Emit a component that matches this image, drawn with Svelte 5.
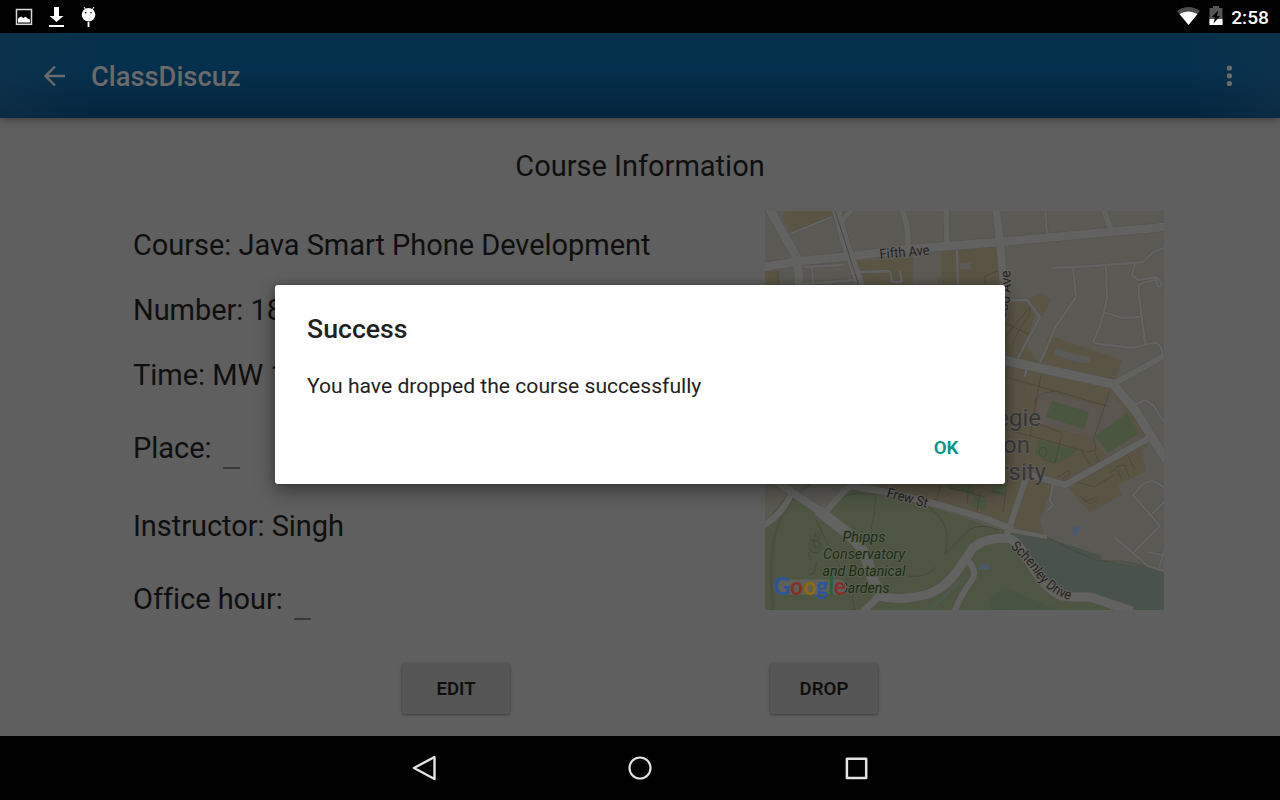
<script>
  const details = [
    { label: 'Course:', value: 'Java Smart Phone Development', height: 65 },
    { label: 'Number:', value: '18', height: 65 },
    { label: 'Time:', value: 'MW 1', height: 65 },
    { label: 'Place:', value: '', height: 81 },
    { label: 'Instructor:', value: 'Singh', height: 75 },
    { label: 'Office hour:', value: '', height: 71 }
  ];
  const arterial = [
    ['M769 208L797 258L800 290', 9],
    ['M764 267L800 261L843 257L910 249L1000 242L1165 227', 8.5],
    ['M836 208L845 242L862 290', 9],
    ['M853 208L841 223', 5],
    ['M901 208Q909 222 908 249', 6],
    ['M946 208L947 246', 5.5],
    ['M996 208L1000 242L1005 300', 8],
    ['M1103 208L1111 229', 6],
    ['M1003 360L1113 384L1135 410L1166 460', 9],
    ['M1113 384L1166 355', 6],
    ['M1149 438L1065 485L1030 475', 6.5],
    ['M1026 478L1007 534', 6],
    ['M764 475L777 482L820 511', 8],
    ['M818 510L846 532Q862 545 867 560Q872 583 881 594', 11],
    ['M878 596Q900 602 928 594Q946 588 960 567L973 548Q984 538 1007 538C1020 540 1026 560 1038 575Q1053 597 1070 597L1090 597L1132 611', 9],
    ['M827 510L845 490Q849 485 857 487L887 492L940 505L990 520L1013 530', 6.5],
    ['M1010 530L1047 537', 4],
    ['M967 560Q978 570 972 580Q960 596 954 613', 6],
    ['M881 594L862 613', 7],
    ['M793 490Q784 513 763 526', 6]
  ];
  const minor = [
    'M790 234L832 217', 'M804 267L844 265', 'M812 266L813 286', 'M803 284L856 280',
    'M860 272L890 271L892 282L902 282L900 271', 'M1045 208L1047 233', 'M957 250L958 286',
    'M1052 268L1075 267L1106 265L1143 262L1153 252L1166 247',
    'M1073 267L1076 297L1055 328L1040 363', 'M1106 265L1107 298Q1103 320 1095 338Q1090 343 1100 344L1133 348L1152 343Q1162 341 1162 355',
    'M1143 330L1146 344', 'M1103 312L1123 318L1140 317',
    'M1135 263L1132 275L1138 280L1157 277Q1164 283 1160 287Q1155 285 1157 279L1140 284Q1138 287 1139 295L1145 344',
    'M1010 300L1027 300L1040 317L1018 358M1027 366L1025 377',
    'M1135 405L1145 400L1153 405L1164 422',
    'M1165 488L1152 480L1143 484L1133 495L1160 526L1133 553',
    'M1114 537L1133 553L1148 566L1165 571', 'M1165 501L1152 514', 'M1148 552L1166 556M1159 568L1165 548',
    'M1053 484L1050 501L1053 505L1047 511'
  ];
  const trails = [
    'M1005 377L1041 387L1107 406', 'M1041 375L1030 436', 'M1034 405Q1035 393 1055 391',
    'M1110 391L1094 437L1096 450L1087 452L1060 444L1005 429', 'M1033 426L1042 425L1062 433L1055 463L1042 459Q1036 448 1044 447Q1049 450 1044 458',
    'M1094 451L1099 462M1082 451L1090 466', 'M1127 454L1135 470M1110 473L1118 466L1125 465L1129 477M1117 470L1122 480',
    'M1029 308L1005 337M1005 323L1030 335M1031 303L1029 315L1018 332L1012 345',
    'M1058 477L1069 470L1070 474L1062 479M1077 482L1094 487L1114 475',
    'M1081 496Q1088 508 1097 500M1083 499Q1088 503 1097 496',
    'M1047 537L1070 549L1098 561L1120 561L1150 567',
    'M840 499Q853 490 876 495L874 515Q869 531 873 545', 'M920 502Q955 520 945 554M907 576Q925 579 937 566',
    'M945 554L970 529Q985 523 998 530', 'M940 486L937 499L930 501M949 488L975 493M969 482L967 504M980 492L977 512M972 494L986 497',
    'M816 520L827 542L847 580M816 531L811 551Q806 555 812 560M820 533L819 547M817 561L814 573L809 575M852 596L855 612M1008 477L1003 512M992 483L1006 486M990 491L1004 494',
    'M811 536h7v4h-8zM809 543q6-5 12 1q2 7-5 9q-8-1-7-10zM812 545l8 4M815 541v12',
    'M778 271L779 286M939 278V286M985 286V276L998 271'
  ];
</script>

<div class="screen">
  <header class="status">
    <svg width="84" height="24" viewBox="0 0 84 24" class="notices" aria-hidden="true">
      <rect x="1.500" y="5.500" width="15" height="14.800" fill="none" stroke="#d8d8d8" stroke-width="1.500" />
      <path d="M3 18.500v-4l3-2 2.500 1.500 2-1.500 2 2 2.500 1v3z" fill="#fff" />
      <path d="M39 3h5v9h4.500l-7 6-7-6H39zM34 21h15v2H34z" fill="#fff" />
      <path d="M69 3l2 3M79 3l-2 3" stroke="#fff" />
      <circle cx="73.500" cy="10.800" r="6.800" fill="#fff" />
      <path d="M72.600 18h1.800v5h-1.800z" fill="#fff" />
      <circle cx="70.700" cy="8.800" r=".8" /><circle cx="76" cy="8.800" r=".8" />
    </svg>
    <div class="system">
      <svg width="24" height="20" viewBox="0 0 24 20" aria-hidden="true">
        <path d="M0 5Q11.500-3 23 5L11.500 19z" fill="#4c4c4c" />
        <path d="M2.500 8Q11.500 3 20.500 8L11.500 19z" fill="#fff" />
      </svg>
      <svg class="battery" width="14" height="20" viewBox="0 0 14 20" aria-hidden="true">
        <path d="M4 0h6v2h3.500v17H.5V2H4z" fill="#555" />
        <path d="M.5 13h13v6H.5z" fill="#fff" />
        <path d="M9 4.500L3 11h3l-1.500 6.500L11 10H8z" />
      </svg>
      <time>2:58</time>
    </div>
  </header>

  <div class="toolbar">
    <svg width="22" height="22" viewBox="0 0 22 22" aria-hidden="true"><path d="M21 11H2M11 1.500L1.500 11l9.500 9.500" fill="none" stroke="#6a6a6a" stroke-width="2.400" /></svg>
    <h1>ClassDiscuz</h1>
    <svg class="more" width="6" height="22" viewBox="0 0 6 22" aria-hidden="true"><g fill="#6c6c6c"><circle cx="3.400" cy="3" r="2.600" /><circle cx="3.400" cy="10.800" r="2.600" /><circle cx="3.400" cy="18.500" r="2.600" /></g></svg>
  </div>

  <main>
    <h2>Course Information</h2>
    <div class="columns">
      <div class="details">
        {#each details as d}
          <div class="row" style="height: {d.height}px">
            <span>{d.label} {d.value}</span>
            {#if !d.value}<i class="field"></i>{/if}
          </div>
        {/each}
      </div>
      <svg class="map" width="399" height="399" viewBox="765 211 399 399">
        <rect x="765" y="210" width="399" height="400" fill="#5b5953" />
        <g fill="#5a5445">
          <path d="M782 215L787 210H832L833 217L790 234z" />
          <path d="M765 272L777 270L779 286H765zM847 262L913 257V286H855zM941 252L1000 246L1003 286H941z" />
          <path d="M1005 302H1026L1035 315L1025 345L1041 365L1048 335L1122 360L1115 379L1135 410L1148 440L1149 461L1164 500V520L1000 540V300z" />
          <path d="M1028 299L1043 293L1051 300L1042 317L1036 310z" />
          <path d="M870 484H1060V540L1000 522z" />
        </g>
        <path d="M1040 520L1053 484L1068 487L1090 513L1122 495L1118 485L1149 470L1141 445L1164 460V572L1045 537z" fill="#5b5954" />
        <path d="M1141 451L1152 445L1164 464V490L1147 473z" fill="#5b5954" />
        <path d="M1115 382L1164 357V455L1135 410z" fill="#5b5954" />
        <path d="M1038 390L1107 408L1097 439L1036 423zM1110 390L1143 438L1108 458L1092 439z" fill="#5b564f" />
        <path d="M1058 352L1075 358L1087 360" fill="none" stroke="#5a5a58" stroke-width="7" stroke-linecap="round" />
        <path d="M960 263H971V269H960z" fill="#5a5a58" />
        <path d="M765 484L790 490L824 513L850 488L887 492L1007 532L1047 538L1098 561L1164 571V610H765z" fill="#4e5643" />
        <path d="M782 482H857L826 508z" fill="#5a5954" />
        <path d="M765 484L790 491L765 522z" fill="#5a5a52" />
        <path d="M1010 531L1047 538L1100 555L1102 560L1164 570V610H1125L1090 597H1060L1020 550z" fill="#49534b" />
        <path d="M990 610V598L1004 587L1055 609z" fill="#495344" />
        <path d="M950 486L974 484L972 495L950 489zM974 496L987 499L984 510L971 506zM993 484H1006V497L992 493zM1005 366L1009 367L1007 377L1005 376z" fill="#4b5640" />
        <path d="M1052 401L1089 412L1084 429L1046 417zM1127 413L1139 433L1108 453L1095 436zM1038 440L1078 450L1058 463L1035 455z" fill="#4a563f" />
        <path d="M1074 527H1081V529H1078V532H1077V535H1073z" fill="#465877" />
        <path d="M980 565L988 563L990 570L979 569z" fill="#4c5967" />
        <path d="M930 610L965 577" stroke="#4c5a5b" stroke-width="1.200" />
        <path d="M811 484Q790 495 778 525Q768 552 773 610" fill="none" stroke="#474d40" stroke-width="3" opacity=".55" />
        <g fill="none" stroke="#403c31" stroke-width=".8">
          {#each trails as d}<path {d} opacity=".6" />{/each}
        </g>
        <g fill="none" stroke="#54524d" stroke-linejoin="round">
          {#each minor as d}<path {d} stroke-width="3.300" />{/each}
          {#each arterial as [d, w]}<path {d} stroke-width={w + 1} />{/each}
        </g>
        <g fill="none" stroke="#626260" stroke-linejoin="round">
          {#each minor as d}<path {d} stroke-width="2.300" />{/each}
          {#each arterial as [d, w]}<path {d} stroke-width={w} />{/each}
        </g>
        <path d="M835 210L845 242L859 286" fill="none" stroke="#494743" stroke-width="1" />
        <g class="road">
          <text x="880" y="259" transform="rotate(-5 880 259)" textLength="50" lengthAdjust="spacingAndGlyphs">Fifth Ave</text>
          <text x="886" y="497" transform="rotate(15 886 497)" textLength="42" lengthAdjust="spacingAndGlyphs">Frew St</text>
          <path id="morewood" d="M984 362C1004 325 1014 305 1010 270" fill="none" stroke="none" />
          <text text-anchor="end"><textPath href="#morewood" startOffset="100%">Morewood Ave</textPath></text>
          <path id="schenley" d="M1010 547Q1026 561 1034 573Q1050 597 1078 602" fill="none" stroke="none" />
          <text><textPath href="#schenley" textLength="81" lengthAdjust="spacingAndGlyphs">Schenley Drive</textPath></text>
        </g>
        <g class="campus" text-anchor="end">
          <text x="1041" y="426">Carnegie</text>
          <text x="1030" y="453">Mellon</text>
          <text x="1046" y="480">University</text>
        </g>
        <g class="park" text-anchor="middle">
          <text x="864" y="542" textLength="43" lengthAdjust="spacingAndGlyphs">Phipps</text>
          <text x="864" y="559" textLength="82" lengthAdjust="spacingAndGlyphs">Conservatory</text>
          <text x="864" y="576" textLength="83" lengthAdjust="spacingAndGlyphs">and Botanical</text>
          <text x="864" y="593" textLength="51" lengthAdjust="spacingAndGlyphs">Gardens</text>
        </g>
        <path d="M782 587H839" stroke="#5e6059" stroke-width="15" stroke-linecap="round" />
        <text class="brand" x="773.500" y="594.500" textLength="72.500" lengthAdjust="spacingAndGlyphs"><tspan fill="#2c5498">G</tspan><tspan fill="#84302a">o</tspan><tspan fill="#8e6b05">o</tspan><tspan fill="#2c5498">g</tspan><tspan fill="#226537">l</tspan><tspan fill="#84302a">e</tspan></text>
      </svg>
    </div>
    <div class="actions"><button>EDIT</button><button>DROP</button></div>
  </main>

  <nav>
    <svg width="26" height="28" viewBox="0 0 26 28" aria-hidden="true"><path d="M23.500 3v22L3 14z" fill="none" stroke="#e4e4e4" stroke-width="2.400" stroke-linejoin="round" /></svg>
    <svg width="26" height="28" viewBox="0 0 26 28" aria-hidden="true"><circle cx="13" cy="14" r="10.500" fill="none" stroke="#e4e4e4" stroke-width="2.200" /></svg>
    <svg width="26" height="28" viewBox="0 0 26 28" aria-hidden="true"><rect x="2.900" y="4.800" width="19.300" height="19.200" fill="none" stroke="#e4e4e4" stroke-width="2.500" stroke-linejoin="round" /></svg>
  </nav>

  <section class="dialog" role="dialog" aria-label="Success">
    <h3>Success</h3>
    <p>You have dropped the course successfully</p>
    <button>OK</button>
  </section>
</div>

<style>
  :global(body) { margin: 0; background: #000; }
  .screen { position: relative; width: 1280px; height: 800px; display: flex; flex-direction: column; overflow: hidden; font-family: Roboto, sans-serif; color: #0f0f0f; background: #5f5f5f; }
  .screen * { box-sizing: border-box; }
  h1, h2, h3, p { margin: 0; font-weight: 400; }
  svg { display: block; flex: none; }
  button { font: 600 18.660px Roboto, sans-serif; border: 0; padding: 0; color: inherit; }
  .status { height: 33px; flex: none; background: #000; display: flex; justify-content: space-between; padding: 4px 11px 0 15px; }
  .system { display: flex; color: #fff; padding-top: 2px; }
  .battery { margin-left: 8px; }
  time { font-size: 19.200px; font-weight: 500; line-height: 23px; margin-left: 8px; }
  .toolbar { height: 85px; flex: none; z-index: 1; display: flex; align-items: center; padding: 0 48px 0 44px; background: linear-gradient(90deg, rgba(20, 52, 75, .45), transparent 8%, transparent 93%, rgba(20, 52, 75, .45)), linear-gradient(#05304a, #05304d 40%, #05243c); box-shadow: 0 2px 8px rgba(0, 0, 0, .35); }
  h1 { margin-left: 25px; font-size: 27.300px; font-weight: 550; color: #6a6a6a; line-height: 32px; padding-top: 2px; }
  .more { margin-left: auto; }
  main { flex: 1; min-height: 0; }
  h2 { padding-top: 30px; height: 93px; text-align: center; font-size: 29px; line-height: 36px; }
  .columns { display: flex; justify-content: space-between; padding: 0 116px 0 133px; height: 399px; }
  .details { padding-top: 16px; font-size: 29px; line-height: 36px; letter-spacing: -.04px; white-space: pre; }
  .row { display: flex; }
  .row:nth-child(4) { padding-top: 8px; }
  .row:nth-child(5) { padding-top: 5px; }
  .row:nth-child(6) { padding-top: 3px; }
  .field { width: 17px; height: 2px; background: #393939; margin: 37px 0 0 4px; }
  .actions { display: flex; gap: 260px; padding: 53px 0 0 402px; }
  .actions button { width: 108px; height: 51px; border-radius: 3px; background: #565656; box-shadow: 0 1px 3px rgba(0, 0, 0, .4); }
  nav { height: 64px; flex: none; display: flex; justify-content: center; align-items: center; gap: 190.500px; background: #000; }
  .road text { font-size: 14px; fill: #22211f; stroke: #62615b; stroke-width: 2px; paint-order: stroke; }
  .campus text { font-size: 24px; fill: #363738; stroke: #5f5c55; stroke-width: 2px; paint-order: stroke; }
  .park text { font-size: 15px; font-style: italic; fill: #1c2c15; stroke: #575e4e; stroke-width: 2px; paint-order: stroke; }
  .brand { font: 700 24px Lato, sans-serif; }
  .dialog { position: absolute; z-index: 2; left: 275px; top: 285px; width: 730px; height: 199px; background: #fff; border-radius: 3px; padding: 28px 32px 0; display: flex; flex-direction: column; color: #212121; box-shadow: 0 8px 20px rgba(0, 0, 0, .35), 0 0 8px rgba(0, 0, 0, .25); }
  h3 { font-size: 26.660px; font-weight: 550; line-height: 32px; }
  p { font-size: 21.120px; line-height: 26px; margin-top: 28px; }
  .dialog button { align-self: flex-end; width: 48px; height: 24px; margin-top: 37px; background: none; color: #009688; line-height: 24px; margin-right: 3px; }
</style>
